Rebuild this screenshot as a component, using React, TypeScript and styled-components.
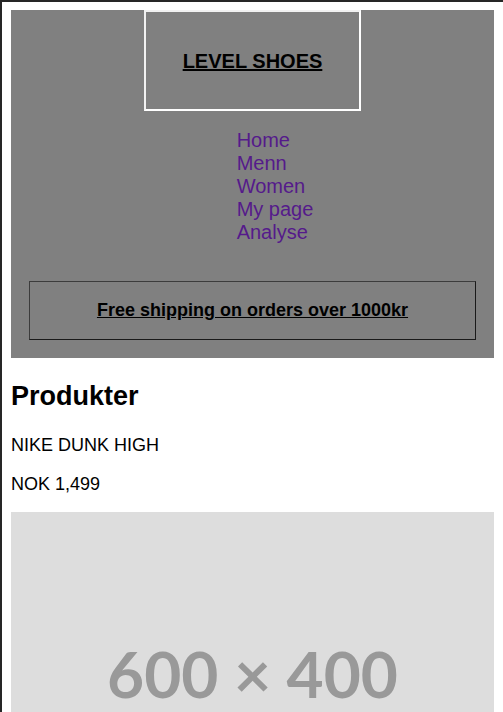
import styled, { createGlobalStyle } from 'styled-components';

const GlobalStyle = createGlobalStyle`
  html {
    border-top: 2px solid #262626;
    border-left: 2px solid #262626;
    background: #fff;
  }
  body {
    margin: 8px 9px 9px 9px;
    font-family: 'Liberation Sans', Arial, sans-serif;
    font-size: 18px;
    color: #000;
  }
`;

const navLinks = ['Home', 'Menn', 'Women', 'My page', 'Analyse'];

const App = () => {
  return (
    <>
      <GlobalStyle />
      <Header>
        <LogoBox>
          <LogoLink href="#">LEVEL SHOES</LogoLink>
        </LogoBox>
        <NavList>
          {navLinks.map((label) => (
            <li key={label}>
              <NavLink href="#">{label}</NavLink>
            </li>
          ))}
        </NavList>
        <ShippingBanner>
          <ShippingLink href="#">Free shipping on orders over 1000kr</ShippingLink>
        </ShippingBanner>
      </Header>

      <main>
        <SectionTitle>Produkter</SectionTitle>
        <ProductText>NIKE DUNK HIGH</ProductText>
        <ProductText>NOK 1,499</ProductText>
        <Placeholder>
          <PlaceholderLabel>600 × 400</PlaceholderLabel>
        </Placeholder>
      </main>
    </>
  );
};

export default App;

const Header = styled.header`
  background-color: #808080;
  display: flex;
  flex-direction: column;
  align-items: center;
  padding: 0 18px 18px;
`;

const LogoBox = styled.div`
  width: 213px;
  height: 96px;
  padding-top: 1px;
  border: 2px solid #fff;
  border-top-color: #f2f2f2;
  border-left-color: #f2f2f2;
  display: flex;
  align-items: center;
  justify-content: center;
`;

const LogoLink = styled.a`
  font-size: 20px;
  font-weight: 700;
  color: #000;
  text-decoration: underline;
`;

const NavList = styled.ul`
  list-style: none;
  margin: 18px 0 37px;
  padding: 0 0 0 45px;
  width: fit-content;
  align-self: center;

  li {
    font-size: 20px;
    line-height: 23px;
  }
`;

const NavLink = styled.a`
  color: #551a8b;
  text-decoration: none;
`;

const ShippingBanner = styled.div`
  align-self: stretch;
  height: 57px;
  border: 1px solid #1a1a1a;
  border-top-color: #3c3c3c;
  border-left-color: #3c3c3c;
  display: flex;
  align-items: center;
  justify-content: center;
`;

const ShippingLink = styled.a`
  font-size: 18px;
  font-weight: 700;
  color: #000;
  text-decoration: underline;
`;

const SectionTitle = styled.h2`
  font-size: 27px;
  font-weight: 700;
  margin: 23px 0 23px;
`;

const ProductText = styled.p`
  font-size: 18px;
  margin: 18px 0 17px;
`;

const Placeholder = styled.div`
  width: 100%;
  aspect-ratio: 3 / 2;
  background-color: #dddddd;
  display: flex;
  align-items: center;
  justify-content: center;
`;

const PlaceholderLabel = styled.span`
  font-family: Lato, 'Open Sans', sans-serif;
  font-weight: 700;
  font-size: 64px;
  color: #999999;
`;
